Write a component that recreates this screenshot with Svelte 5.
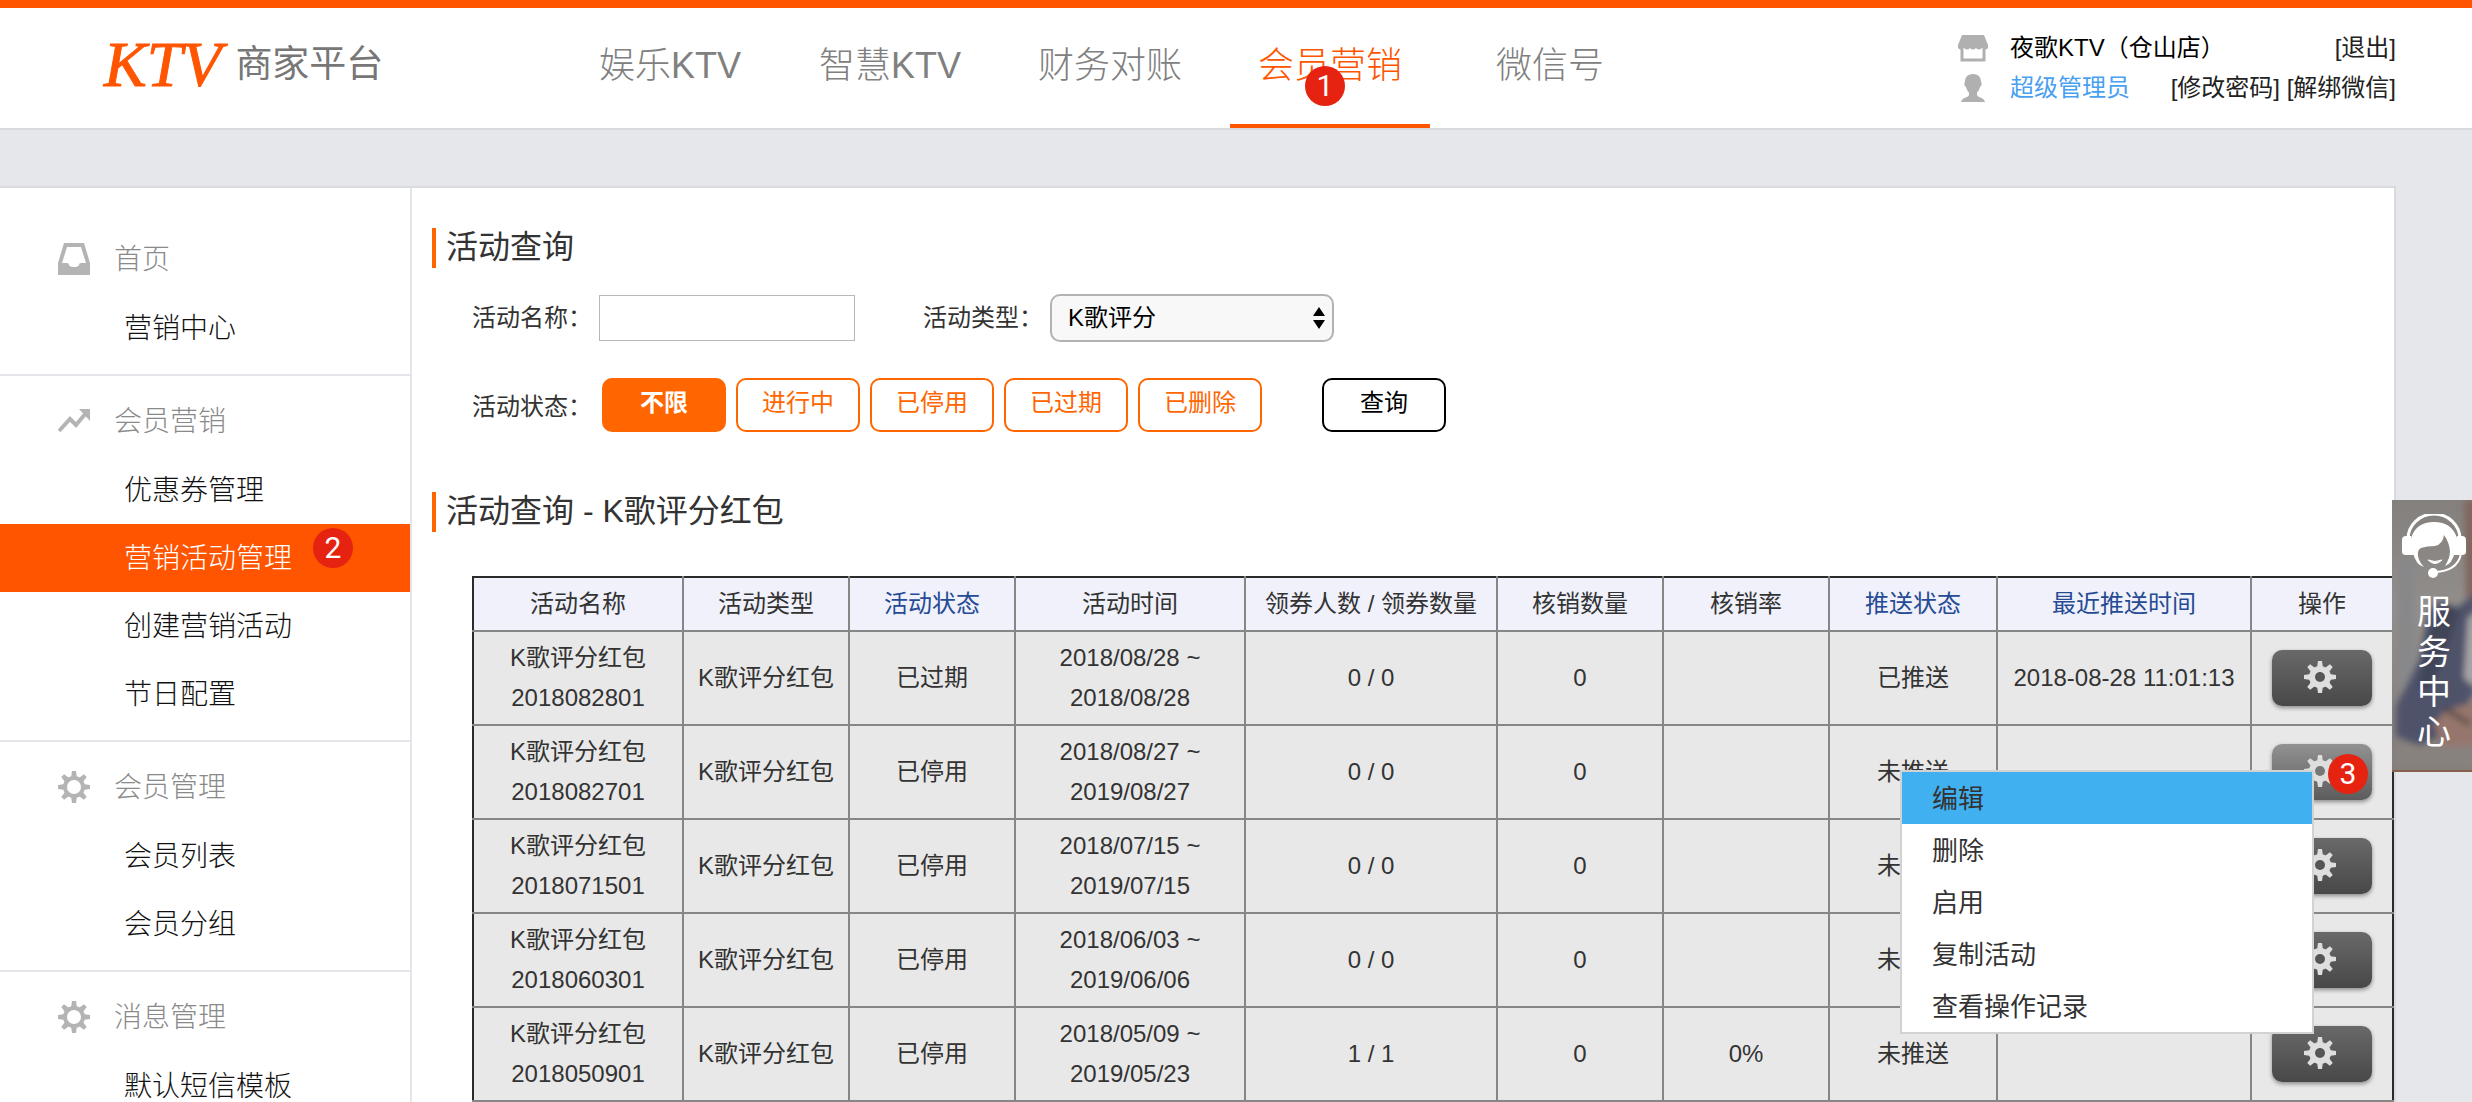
<script>
  const tabs = ['娱乐KTV', '智慧KTV', '财务对账', '会员营销', '微信号'];
  let activeTab = $state('会员营销');

  const groups = [
    { icon: 'inbox', title: '首页', items: ['营销中心'] },
    { icon: 'trend', title: '会员营销', items: ['优惠券管理', '营销活动管理', '创建营销活动', '节日配置'] },
    { icon: 'gear', title: '会员管理', items: ['会员列表', '会员分组'] },
    { icon: 'gear', title: '消息管理', items: ['默认短信模板'] }
  ];
  const activeItem = '营销活动管理';

  const statuses = ['不限', '进行中', '已停用', '已过期', '已删除'];
  let status = $state('不限');

  const columns = [
    { label: '活动名称', width: 210 },
    { label: '活动类型', width: 166 },
    { label: '活动状态', width: 166, sortable: true },
    { label: '活动时间', width: 230 },
    { label: '领券人数 / 领券数量', width: 252 },
    { label: '核销数量', width: 166 },
    { label: '核销率', width: 166 },
    { label: '推送状态', width: 168, sortable: true },
    { label: '最近推送时间', width: 254, sortable: true },
    { label: '操作', width: 142 }
  ];

  const rows = [
    { id: '2018082801', state: '已过期', from: '2018/08/28', to: '2018/08/28', got: '0 / 0', used: '0', rate: '', push: '已推送', last: '2018-08-28 11:01:13' },
    { id: '2018082701', state: '已停用', from: '2018/08/27', to: '2019/08/27', got: '0 / 0', used: '0', rate: '', push: '未推送', last: '' },
    { id: '2018071501', state: '已停用', from: '2018/07/15', to: '2019/07/15', got: '0 / 0', used: '0', rate: '', push: '未推送', last: '' },
    { id: '2018060301', state: '已停用', from: '2018/06/03', to: '2019/06/06', got: '0 / 0', used: '0', rate: '', push: '未推送', last: '' },
    { id: '2018050901', state: '已停用', from: '2018/05/09', to: '2019/05/23', got: '1 / 1', used: '0', rate: '0%', push: '未推送', last: '' }
  ];
  let openRow = $state('2018082701');

  const actions = ['编辑', '删除', '启用', '复制活动', '查看操作记录'];
</script>

{#snippet gear(hole)}
  {#each [0, 45, 90, 135] as angle}
    <path d="M14 0h4l1 7v18l-1 7h-4l-1-7V7z" transform="rotate({angle} 16 16)" />
  {/each}
  <circle cx="16" cy="16" r="11" />
  <circle cx="16" cy="16" r="5" fill={hole} />
{/snippet}

<div class="page">
  <header>
    <a class="logo" href="#home"><span class="brand">KTV</span><span class="sub">商家平台</span></a>
    <nav class="tabs" aria-label="主导航">
      {#each tabs as tab}
        <a href="#{tab}" class:active={tab === activeTab} onclick={() => (activeTab = tab)}>
          {tab}
          {#if tab === '会员营销'}<span class="badge on-tab">1</span>{/if}
        </a>
      {/each}
    </nav>
    <div class="account">
      <svg class="acc-icon" viewBox="0 0 32 28" aria-hidden="true">
        <path d="M5 1h22l4 10v3q-3 3-6 0-3 3-6 0-3 3-6 0-3 3-6 0-3 3-6 0v-3z" />
        <path d="M5 15v11h22V15" fill="none" stroke="#b0b0b0" stroke-width="3" />
      </svg>
      <span class="shop">夜歌KTV（仓山店）</span>
      <span class="links"><a href="#logout">[退出]</a></span>
      <svg class="acc-icon" viewBox="0 0 32 28" aria-hidden="true">
        <path d="M16 0c6 0 8 4 8 8 1 0 1 4-1 5-1 4-3 5-3 6v2c1 3 7 2 8 7H4c1-5 7-4 8-7v-2c0-1-2-2-3-6-2-1-2-5-1-5 0-4 2-8 8-8z" />
      </svg>
      <a class="role" href="#role">超级管理员</a>
      <span class="links"><a href="#password">[修改密码]</a> <a href="#unbind">[解绑微信]</a></span>
    </div>
  </header>

  <div class="body">
    <aside>
      {#each groups as group}
        <section class="group">
          <h3>
            <svg class="side-icon" viewBox="0 0 32 32" aria-hidden="true">
              {#if group.icon === 'inbox'}
                <path fill-rule="evenodd" d="M6 0h20l6 20v12H0V20zM9 4L4 20h5q2 0 2 2 1 2 5 2t5-2q0-2 2-2h5L23 4z" />
              {:else if group.icon === 'trend'}
                <path d="M1 26L12 14l6 6L28 8" fill="none" stroke="#b4b4b4" stroke-width="4" />
                <path d="M21 4h11v12z" />
              {:else}
                {@render gear('#fff')}
                <circle cx="16" cy="16" r="7" fill="#fff" />
              {/if}
            </svg>
            {group.title}
          </h3>
          {#each group.items as item}
            <a href="#{item}" class:active={item === activeItem}>
              {item}{#if item === activeItem}<span class="badge on-item">2</span>{/if}
            </a>
          {/each}
        </section>
      {/each}
    </aside>

    <main>
      <h2>活动查询</h2>
      <form onsubmit={(e) => e.preventDefault()}>
        <div class="fields">
          <label for="name">活动名称：</label>
          <input id="name" type="text" />
          <label class="second" for="kind">活动类型：</label>
          <span class="select">
            <select id="kind"><option>K歌评分</option></select>
            <svg viewBox="0 0 12 22" aria-hidden="true"><path d="M6 0l6 9H0zM6 22l6-9H0z" /></svg>
          </span>
        </div>
        <div class="states">
          <span class="label">活动状态：</span>
          <div class="choices">
            {#each statuses as s}
              <button type="button" class:chosen={s === status} onclick={() => (status = s)}>{s}</button>
            {/each}
          </div>
          <button type="submit" class="query">查询</button>
        </div>
      </form>

      <h2>活动查询 - K歌评分红包</h2>
      <table>
        <colgroup>
          {#each columns as c}<col style:width="{c.width}px" />{/each}
        </colgroup>
        <thead>
          <tr>
            {#each columns as c}
              <th scope="col">{#if c.sortable}<a href="#sort">{c.label}</a>{:else}{c.label}{/if}</th>
            {/each}
          </tr>
        </thead>
        <tbody>
          {#each rows as row}
            <tr>
              <td>K歌评分红包<br />{row.id}</td>
              <td>K歌评分红包</td>
              <td>{row.state}</td>
              <td>{row.from} ~<br />{row.to}</td>
              <td>{row.got}</td>
              <td>{row.used}</td>
              <td>{row.rate}</td>
              <td>{row.push}</td>
              <td>{row.last}</td>
              <td>
                <div class="ops">
                  <button
                    type="button"
                    aria-label="操作"
                    class:open={row.id === openRow}
                    onclick={() => (openRow = openRow === row.id ? '' : row.id)}
                  >
                    <svg viewBox="0 0 32 32" aria-hidden="true">{@render gear(row.id === openRow ? '#777' : '#555')}</svg>
                  </button>
                  {#if row.id === openRow}
                    <ul class="menu" role="menu">
                      {#each actions as action, i}
                        <li role="none"><button type="button" role="menuitem" class:hot={i === 0}>{action}</button></li>
                      {/each}
                    </ul>
                    <span class="badge on-ops">3</span>
                  {/if}
                </div>
              </td>
            </tr>
          {/each}
        </tbody>
      </table>
    </main>
  </div>

  <a class="service" href="#service">
    <svg class="photo" viewBox="0 0 80 272" preserveAspectRatio="none" aria-hidden="true">
      <defs>
        <linearGradient id="wall" x1="0" y1="0" x2="0" y2="1">
          <stop offset="0" stop-color="#84807d" />
          <stop offset="0.4" stop-color="#928e8b" />
          <stop offset="0.85" stop-color="#85807d" />
          <stop offset="1" stop-color="#857c77" />
        </linearGradient>
        <filter id="soft" x="-20%" y="-20%" width="140%" height="140%"><feGaussianBlur stdDeviation="3" /></filter>
      </defs>
      <rect width="80" height="272" fill="url(#wall)" />
      <g filter="url(#soft)">
        <rect x="6" y="60" width="16" height="130" fill="#87888a" />
        <path d="M72 0h16v105L74 96z" fill="#80665e" />
        <path d="M84 92L62 110 50 100 36 112 28 158 4 206v30l24 10 34-18 22-40z" fill="#50536a" />
        <path d="M56 104l12 6-16 46-14 34-12-2 12-60z" fill="#3f4458" />
        <path d="M84 112l-8 6-4 60 12 10z" fill="#a8a6a8" />
        <path d="M42 224l12-14 30-8v42l-32 4z" fill="#96766c" />
        <path d="M52 208l26 16" stroke="#4a4443" stroke-width="4" />
        <path d="M0 246h84v22H0z" fill="#88827f" />
      </g>
      <path d="M0 270h80v2H0z" fill="#86604c" />
    </svg>
    <svg class="headset" viewBox="0 0 64 64" aria-hidden="true">
      <path d="M6 25a26 25 0 0 1 52 0" fill="none" stroke="#fff" stroke-width="3" />
      <path d="M0 26q0-4 4-4h5l4 19H4q-4 0-4-3zM64 26q0-4-4-4h-5l-4 19h9q4 0 4-3z" fill="#fff" />
      <path
        d="M9 24Q14 8 32 8t23 16l-2 14q-3 12-10 14 5-8 5-15-1-9-6-16-1 9-9 11-8 0-14 2-4 2-3 8 1 6 6 11-8-2-11-14z"
        fill="#fff"
      />
      <path d="M26 46q7 7 14 0-7 3-14 0z" fill="#fff" stroke="#fff" />
      <path d="M59 40Q55 58 31 58" fill="none" stroke="#fff" stroke-width="2" />
      <circle cx="31" cy="59" r="5" fill="#fff" />
    </svg>
    <span>服务中心</span>
  </a>
</div>

<style>
  :global(body) { margin: 0; background: #e6e7eb; }
  .page, .page :global(*) { box-sizing: border-box; }
  .page {
    position: relative;
    height: 100vh;
    overflow: hidden;
    display: flex;
    flex-direction: column;
    background: #e6e7eb;
    color: #333;
    font-family: "Liberation Sans", "Noto Sans CJK SC", sans-serif;
    font-size: 24px;
    line-height: 40px;
  }
  a { color: inherit; text-decoration: none; }
  button, input, select { font: inherit; margin: 0; }
  h2, h3 { margin: 0; font-weight: 400; }

  .badge {
    position: absolute;
    width: 40px;
    height: 40px;
    border-radius: 50%;
    background: #e62310;
    color: #fff;
    font: 400 30px/40px Roboto, sans-serif;
    text-align: center;
  }

  header {
    flex: none;
    display: flex;
    border-top: 8px solid #f50;
    border-bottom: 2px solid #d9dadd;
    background: #fff;
  }
  .logo {
    flex: none;
    width: 570px;
    height: 120px;
    padding: 0 0 6px 104px;
    display: flex;
    align-items: center;
    gap: 14px;
  }
  .brand {
    font: italic 400 64px/72px "Liberation Serif", serif;
    color: #f50;
    -webkit-text-stroke: 1px #f50;
  }
  .sub { font-size: 37px; color: #777; }
  .tabs { flex: 1; display: flex; gap: 20px; }
  .tabs a {
    position: relative;
    width: 200px;
    border-bottom: 4px solid transparent;
    display: flex;
    align-items: center;
    justify-content: center;
    font-size: 36px;
    font-weight: 300;
    color: #808080;
  }
  .tabs a.active { color: #f50; border-bottom-color: #f50; }
  .on-tab { left: 75px; top: 58px; }
  .account {
    flex: none;
    align-self: flex-start;
    width: 439px;
    margin: 20px 76px 0 0;
    display: grid;
    grid-template-columns: 32px 120px 1fr;
    align-items: center;
    column-gap: 21px;
    color: #222;
  }
  .acc-icon { width: 32px; height: 28px; fill: #b0b0b0; }
  .shop { color: #000; white-space: nowrap; }
  .role { color: #4a9ff0; }
  .links { justify-self: end; white-space: nowrap; }

  .body {
    flex: 1;
    min-height: 0;
    margin: 56px 76px 0 0;
    display: flex;
    border-top: 2px solid #d9dadd;
    border-right: 2px solid #d9dadd;
    background: #fff;
  }
  aside {
    flex: none;
    width: 412px;
    border-right: 2px solid #e4e5ea;
    font-size: 28px;
    font-weight: 300;
    line-height: 68px;
  }
  .group { padding: 12px 0; border-bottom: 2px solid #e4e5ea; }
  .group:first-child { padding-top: 38px; }
  .group h3 {
    display: flex;
    align-items: center;
    gap: 24px;
    height: 68px;
    padding-left: 58px;
    font-size: 28px;
    font-weight: 300;
    line-height: 70px;
    color: #8a8a8a;
  }
  .side-icon { width: 32px; height: 34px; padding-bottom: 2px; fill: #b4b4b4; }
  .group a { position: relative; display: block; height: 68px; padding-left: 124px; line-height: 70px; color: #111; }
  .group a.active { background: #f50; color: #fff; }
  .on-item { left: 313px; top: 4px; }

  main { flex: 1; min-width: 0; padding: 40px 0 0 20px; }
  h2 { height: 40px; border-left: 4px solid #f60; padding-left: 10px; font-size: 32px; line-height: 38px; }
  form { padding: 26px 0 60px 40px; }
  .fields, .states { display: flex; align-items: center; }
  .fields { margin-bottom: 36px; }
  .fields label, .label { flex: none; width: 120px; white-space: nowrap; }
  .label { padding-top: 4px; }
  .fields .second { margin-left: 68px; }
  input {
    width: 256px;
    height: 46px;
    margin-left: 7px;
    padding: 0 8px;
    border: 1px solid #b8b8b8;
    background: #fff;
  }
  .select { position: relative; margin-left: 7px; }
  select {
    display: block;
    appearance: none;
    width: 284px;
    height: 48px;
    padding: 0 40px 0 16px;
    border: 2px solid #b2b2b2;
    border-radius: 10px;
    background: #f8f8f8;
    color: #000;
  }
  .select svg { position: absolute; right: 9px; top: 13px; width: 12px; height: 22px; pointer-events: none; }
  .choices { display: flex; gap: 10px; margin-left: 10px; }
  .states button {
    width: 124px;
    height: 54px;
    padding: 0 0 4px;
    border: 2px solid #f60;
    border-radius: 10px;
    background: #fff;
    color: #f60;
  }
  .states .chosen { background: #f60; color: #fff; font-weight: 700; }
  .states .query { margin-left: 60px; border-color: #000; color: #000; }

  table {
    width: calc(100% - 40px);
    margin: 44px 0 0 40px;
    border: 2px solid #2b2b2b;
    border-collapse: collapse;
    table-layout: fixed;
    text-align: center;
  }
  th, td { padding: 6px 0; white-space: nowrap; }
  th { background: #f0f1fb; font-weight: 400; }
  th a { color: #264b94; }
  td { background: #e8e8e8; border-top: 2px solid #868686; border-bottom: 2px solid #868686; }
  th + th, td + td { border-left: 2px solid #868686; }

  .ops { position: relative; width: 100px; height: 56px; margin: 0 auto; }
  .ops > button {
    display: flex;
    align-items: center;
    justify-content: center;
    width: 100%;
    height: 100%;
    padding: 0 4px 2px 0;
    border: 0;
    border-radius: 10px;
    background: linear-gradient(#696969, #484848);
    box-shadow: 0 2px 4px #0006;
  }
  .ops > button.open { background: linear-gradient(#929292, #5c5c5c); }
  .ops svg { width: 32px; height: 32px; fill: #dedede; }
  .menu {
    position: absolute;
    z-index: 1;
    top: 26px;
    right: 58px;
    width: 414px;
    margin: 0;
    padding: 0;
    border: 2px solid #d2d2d2;
    background: #fff;
    list-style: none;
  }
  .menu button {
    display: block;
    width: 100%;
    height: 52px;
    padding: 2px 30px 0;
    border: 0;
    background: none;
    color: #333;
    font-size: 26px;
    text-align: left;
  }
  .menu .hot { background: #41b0f0; }
  .on-ops { z-index: 2; left: 56px; top: 10px; }

  .service {
    position: absolute;
    z-index: 3;
    top: 500px;
    right: 0;
    width: 80px;
    height: 272px;
    padding: 14px 0 0 4px;
    display: flex;
    flex-direction: column;
    align-items: center;
    gap: 14px;
    color: #fff;
    font-size: 34px;
  }
  .photo { position: absolute; inset: 0; width: 100%; height: 100%; }
  .headset { position: relative; flex: none; width: 64px; height: 64px; }
  .service span { position: relative; width: 34px; word-break: break-all; }
</style>
